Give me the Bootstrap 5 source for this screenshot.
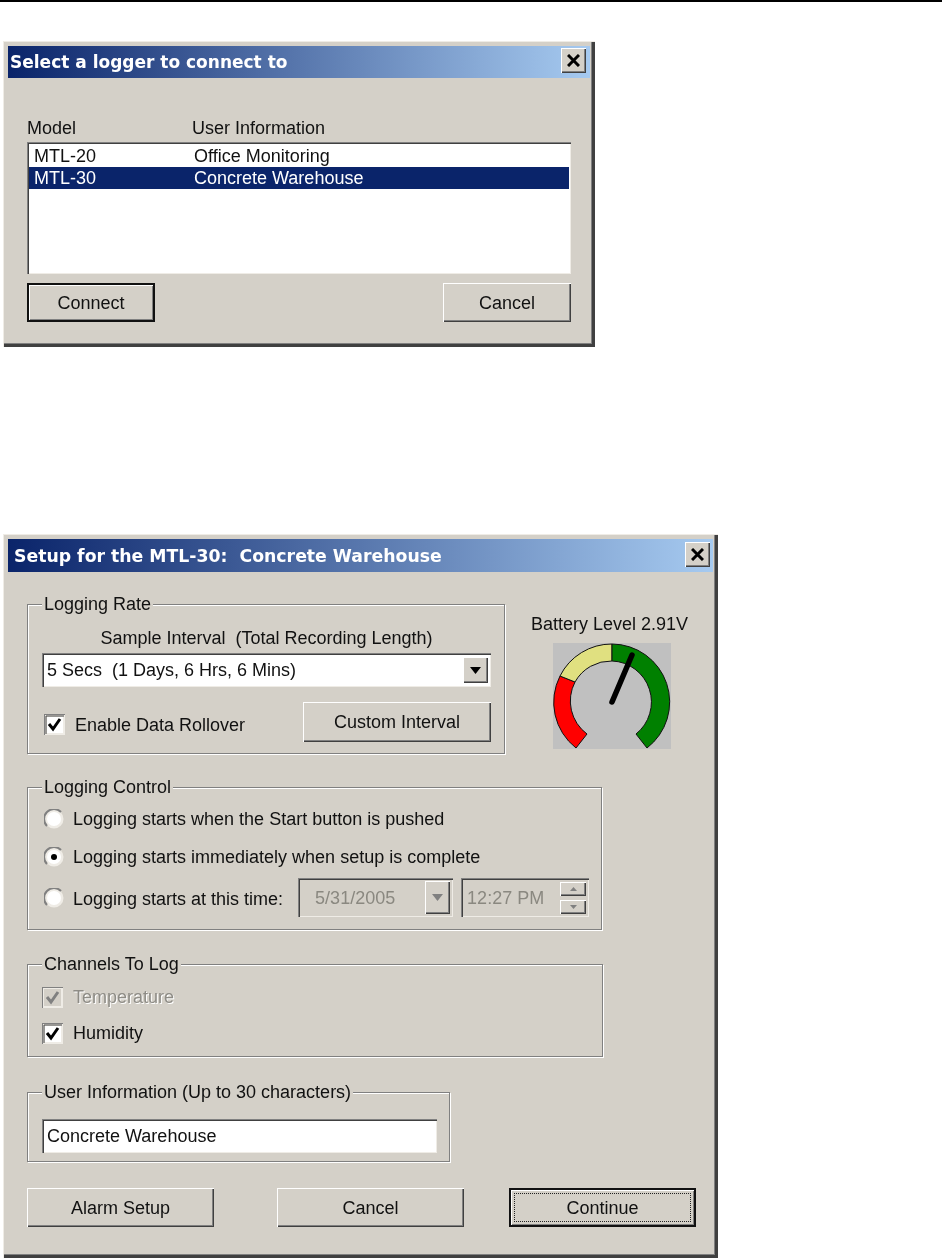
<!doctype html>
<html lang="en">
<head>
<meta charset="utf-8">
<title>Logger dialogs</title>
<link href="https://cdn.jsdelivr.net/npm/bootstrap@5.3.0/dist/css/bootstrap.min.css" rel="stylesheet">
<style>
html,body{background:#fff}
body{margin:0;font-family:"Liberation Sans",Arial,sans-serif;font-size:18px;line-height:22px;color:#111;border-top:2px solid #000}
.w-dialog{background:#d4d0c8;margin-left:3px;padding-left:5px;box-shadow:inset 1px 1px #efece6,inset -3px -3px #404040,inset -4px -4px #808080;filter:blur(.35px)}
.first-dlg{width:592px;height:306px;margin-top:39px;padding-top:5px}
.second-dlg{width:715px;height:724px;margin-top:187px;padding-top:5px}
.w-title{margin-right:5px;background:linear-gradient(90deg,#0a246a,#a6caf0);color:#fff;font-family:"DejaVu Sans",sans-serif;font-weight:700;font-size:17px}
.w-title>span{padding-top:3px}
.first-dlg .w-title{height:32px;padding:0 4px 4px 2px}
.second-dlg .w-title{height:33px;padding:0 3px 3px 6px;font-size:17.300px}
.w-close{width:25px;height:25px;background:#d4d0c8;box-shadow:inset 1px 1px #fff,inset -1px -1px #404040,inset -2px -2px #808080}
.hdrrow{margin:39px 0 0 19px;height:22px}
.hdrrow span:first-child,.list-line span:first-child{display:inline-block}
.hdrrow span:first-child{width:165px}
.w-list{width:544px;height:132px;margin:3px 0 9px 19px;background:#fff;padding:3px 2px 0 2px;box-shadow:inset 1px 1px #808080,inset 2px 2px #404040,inset -1px -1px #efece6}
.list-line{height:22px;padding-left:5px}
.list-line span:first-child{width:160px}
.list-line.on{background:#0a246a;color:#fff}
.w-btn{display:flex;align-items:center;justify-content:center;padding:0;border:0;border-radius:0;background:#d4d0c8;color:#111;font-size:18px;line-height:22px;box-shadow:inset 1px 1px #fff,inset -1px -1px #404040,inset -2px -2px #808080}
.w-btn.dflt{box-shadow:inset 0 0 0 2px #111,inset 3px 3px #fff,inset -3px -3px #808080}
.btn1{width:128px;height:39px}
.btn-pair{width:544px;margin-left:19px}
.w-group{position:relative;border:1px solid #808080;box-shadow:1px 1px #fff,inset 1px 1px #fff}
.glabel{position:absolute;top:-12px;left:14px;background:#d4d0c8;padding:0 2px}
.w-main{padding:32px 0 0 19px}
.gr1{width:478px;height:150px;flex:none;padding:22px 0 0 14px}
.cap1{text-align:center;width:449px;white-space:nowrap}
.sunk{background:#fff;box-shadow:inset 1px 1px #808080,inset 2px 2px #404040,inset -1px -1px #efece6}
.sel{width:449px;height:34px;margin-top:4px;padding:0 3px 0 5px}
.arrow{width:25px;height:26px;background:#d4d0c8;box-shadow:inset 1px 1px #fff,inset -1px -1px #404040,inset -2px -2px #808080}
.row-bottom{margin-top:15px;height:40px;width:449px}
.check-left{gap:10px;margin:5px 0 0 2px}
.cb{width:21px;height:21px;flex:none;display:block}
.btn-ci{width:188px;height:40px}
.batt{margin-left:25px;width:159px;padding-top:9px;text-align:center}
.batt svg{display:block;margin:8px 0 0 23px}
.gr2{width:575px;height:143px;margin-top:33px;padding:20px 0 0 16px}
.rad{width:20px;height:20px;flex:none;display:block}
.opt{height:22px;gap:9px}
.opt+.opt{margin-top:16px}
.opt.last{height:39px;margin-top:10px;gap:0}
.opt.last>span{flex:none;margin-left:9px;padding-top:3px;white-space:nowrap}
.dim{flex:none;background:#d4d0c8;color:#8a8880;box-shadow:inset 1px 1px #808080,inset 2px 2px #404040,inset -1px -1px #efece6}
.datebox{width:155px;height:39px;margin-left:15px;padding:0 3px 0 17px}
.timebox{width:128px;height:39px;margin-left:8px;padding:0 3px 0 6px}
.datebox .arrow{height:33px}
.mini{width:26px;height:32px;flex-direction:column;justify-content:space-between}
.mini .arrow{height:14px;width:26px}
.gr3{width:576px;height:93px;margin-top:34px;padding:21px 0 0 14px}
.chk{gap:10px;height:22px}
.chk+.chk{margin-top:14px}
.gr4{width:423px;height:70px;margin-top:35px;padding:26px 0 0 14px}
.inp{width:395px;height:34px;padding-left:5px}
.btn-row{margin-top:26px}
.btn-b{width:187px;height:39px}
.gap-a{margin-left:63px}
.gap-b{margin-left:45px}
.focus-dots{border:1px dotted #222;width:177px;height:29px;display:flex;align-items:center;justify-content:center}
.muted-txt{color:#8e8c86;text-shadow:1px 1px #fff}
</style>
</head>
<body>
<section class="w-dialog first-dlg">
  <div class="w-title d-flex align-items-center justify-content-between">
    <span>Select a logger to connect to</span>
    <div class="w-close d-flex align-items-center justify-content-center"><svg width="13" height="13" viewBox="0 0 13 13"><path d="M1 1l11 11M12 1L1 12" stroke="#000" stroke-width="3" fill="none"/></svg></div>
  </div>
  <div class="hdrrow"><span>Model</span><span>User Information</span></div>
  <div class="w-list">
    <div class="list-line"><span>MTL-20</span><span>Office Monitoring</span></div>
    <div class="list-line on"><span>MTL-30</span><span>Concrete Warehouse</span></div>
  </div>
  <div class="d-flex justify-content-between btn-pair">
    <button class="btn w-btn dflt btn1">Connect</button>
    <button class="btn w-btn btn1">Cancel</button>
  </div>
</section>

<section class="w-dialog second-dlg">
  <div class="w-title d-flex align-items-center justify-content-between">
    <span>Setup for the MTL-30:&nbsp; Concrete Warehouse</span>
    <div class="w-close d-flex align-items-center justify-content-center"><svg width="13" height="13" viewBox="0 0 13 13"><path d="M1 1l11 11M12 1L1 12" stroke="#000" stroke-width="3" fill="none"/></svg></div>
  </div>
  <div class="w-main">
    <div class="d-flex">
      <div class="w-group gr1">
        <span class="glabel">Logging Rate</span>
        <div class="cap1">Sample Interval &nbsp;(Total Recording Length)</div>
        <div class="sunk sel d-flex align-items-center justify-content-between">
          <span>5 Secs &nbsp;(1 Days, 6 Hrs, 6 Mins)</span>
          <div class="arrow d-flex align-items-center justify-content-center"><svg width="11" height="7" viewBox="0 0 11 7"><path d="M0 0h11L5.500 7z" fill="#000"/></svg></div>
        </div>
        <div class="row-bottom d-flex align-items-center justify-content-between">
          <div class="d-flex align-items-center check-left">
            <svg class="cb" viewBox="0 0 21 21"><rect width="21" height="21" fill="#efece6"/><path d="M0 21V0h21" stroke="#808080" stroke-width="2" fill="none"/><path d="M2 20V2h18" stroke="#404040" fill="none"/><rect x="3" y="3" width="16" height="16" fill="#fff"/><path d="M5 10l4 5 7-10" stroke="#000" stroke-width="3" fill="none"/></svg>
            <span>Enable Data Rollover</span>
          </div>
          <button class="btn w-btn btn-ci">Custom Interval</button>
        </div>
      </div>
      <div class="batt">
        <div>Battery Level 2.91V</div>
        <svg width="118" height="106" viewBox="0 0 118 106">
          <rect width="118" height="106" fill="#c0c0c0"/>
          <path d="M23 105A58 58 0 0 1 7 33L22 39A41 41 0 0 0 34 91Z" fill="#f00" stroke="#111"/>
          <path d="M7 33A58 58 0 0 1 59 1V18A41 41 0 0 0 22 39Z" fill="#e0e080" stroke="#111"/>
          <path d="M59 1A58 58 0 0 1 94 105L83 91A41 41 0 0 0 59 18Z" fill="#008000" stroke="#111"/>
          <path d="M59 59L79 12" stroke="#000" stroke-width="5.500" stroke-linecap="round"/>
        </svg>
      </div>
    </div>

    <div class="w-group gr2">
      <span class="glabel">Logging Control</span>
      <div class="d-flex align-items-center opt">
        <svg class="rad" viewBox="0 0 20 20"><circle cx="10" cy="10" r="9.500" fill="#efece6"/><path d="M3 17A9.500 9.500 0 0 1 17 3" stroke="#808080" stroke-width="2" fill="none"/><circle cx="10" cy="10" r="7" fill="#fff"/></svg>
        <span>Logging starts when the Start button is pushed</span>
      </div>
      <div class="d-flex align-items-center opt">
        <svg class="rad" viewBox="0 0 20 20"><circle cx="10" cy="10" r="9.500" fill="#efece6"/><path d="M3 17A9.500 9.500 0 0 1 17 3" stroke="#808080" stroke-width="2" fill="none"/><circle cx="10" cy="10" r="7" fill="#fff"/><circle cx="10" cy="10" r="3" fill="#000"/></svg>
        <span>Logging starts immediately when setup is complete</span>
      </div>
      <div class="d-flex align-items-center opt last">
        <svg class="rad" viewBox="0 0 20 20"><circle cx="10" cy="10" r="9.500" fill="#efece6"/><path d="M3 17A9.500 9.500 0 0 1 17 3" stroke="#808080" stroke-width="2" fill="none"/><circle cx="10" cy="10" r="7" fill="#fff"/></svg>
        <span>Logging starts at this time:</span>
        <div class="dim datebox d-flex align-items-center justify-content-between">
          <span>5/31/2005</span>
          <div class="arrow d-flex align-items-center justify-content-center"><svg width="11" height="7" viewBox="0 0 11 7"><path d="M0 0h11L5.500 7z" fill="#808080"/></svg></div>
        </div>
        <div class="dim timebox d-flex align-items-center justify-content-between">
          <span>12:27 PM</span>
          <div class="mini d-flex">
            <div class="arrow d-flex align-items-center justify-content-center"><svg width="7" height="4" viewBox="0 0 7 4"><path d="M0 4h7L3.500 0z" fill="#808080"/></svg></div>
            <div class="arrow d-flex align-items-center justify-content-center"><svg width="7" height="4" viewBox="0 0 7 4"><path d="M0 0h7L3.500 4z" fill="#808080"/></svg></div>
          </div>
        </div>
      </div>
    </div>

    <div class="w-group gr3">
      <span class="glabel">Channels To Log</span>
      <div class="d-flex align-items-center chk">
        <svg class="cb" viewBox="0 0 21 21"><rect width="21" height="21" fill="#efece6"/><path d="M0 21V0h21" stroke="#808080" stroke-width="2" fill="none"/><rect x="2" y="2" width="17" height="17" fill="#d4d0c8"/><path d="M5 10l4 5 7-10" stroke="#808080" stroke-width="3" fill="none"/></svg>
        <span class="muted-txt">Temperature</span>
      </div>
      <div class="d-flex align-items-center chk">
        <svg class="cb" viewBox="0 0 21 21"><rect width="21" height="21" fill="#efece6"/><path d="M0 21V0h21" stroke="#808080" stroke-width="2" fill="none"/><path d="M2 20V2h18" stroke="#404040" fill="none"/><rect x="3" y="3" width="16" height="16" fill="#fff"/><path d="M5 10l4 5 7-10" stroke="#000" stroke-width="3" fill="none"/></svg>
        <span>Humidity</span>
      </div>
    </div>

    <div class="w-group gr4">
      <span class="glabel">User Information (Up to 30 characters)</span>
      <div class="sunk inp d-flex align-items-center">Concrete Warehouse</div>
    </div>

    <div class="d-flex btn-row">
      <button class="btn w-btn btn-b">Alarm Setup</button>
      <button class="btn w-btn btn-b gap-a">Cancel</button>
      <button class="btn w-btn dflt btn-b gap-b"><span class="focus-dots">Continue</span></button>
    </div>
  </div>
</section>
<script src="https://cdn.jsdelivr.net/npm/bootstrap@5.3.0/dist/js/bootstrap.bundle.min.js"></script>
</body>
</html>
